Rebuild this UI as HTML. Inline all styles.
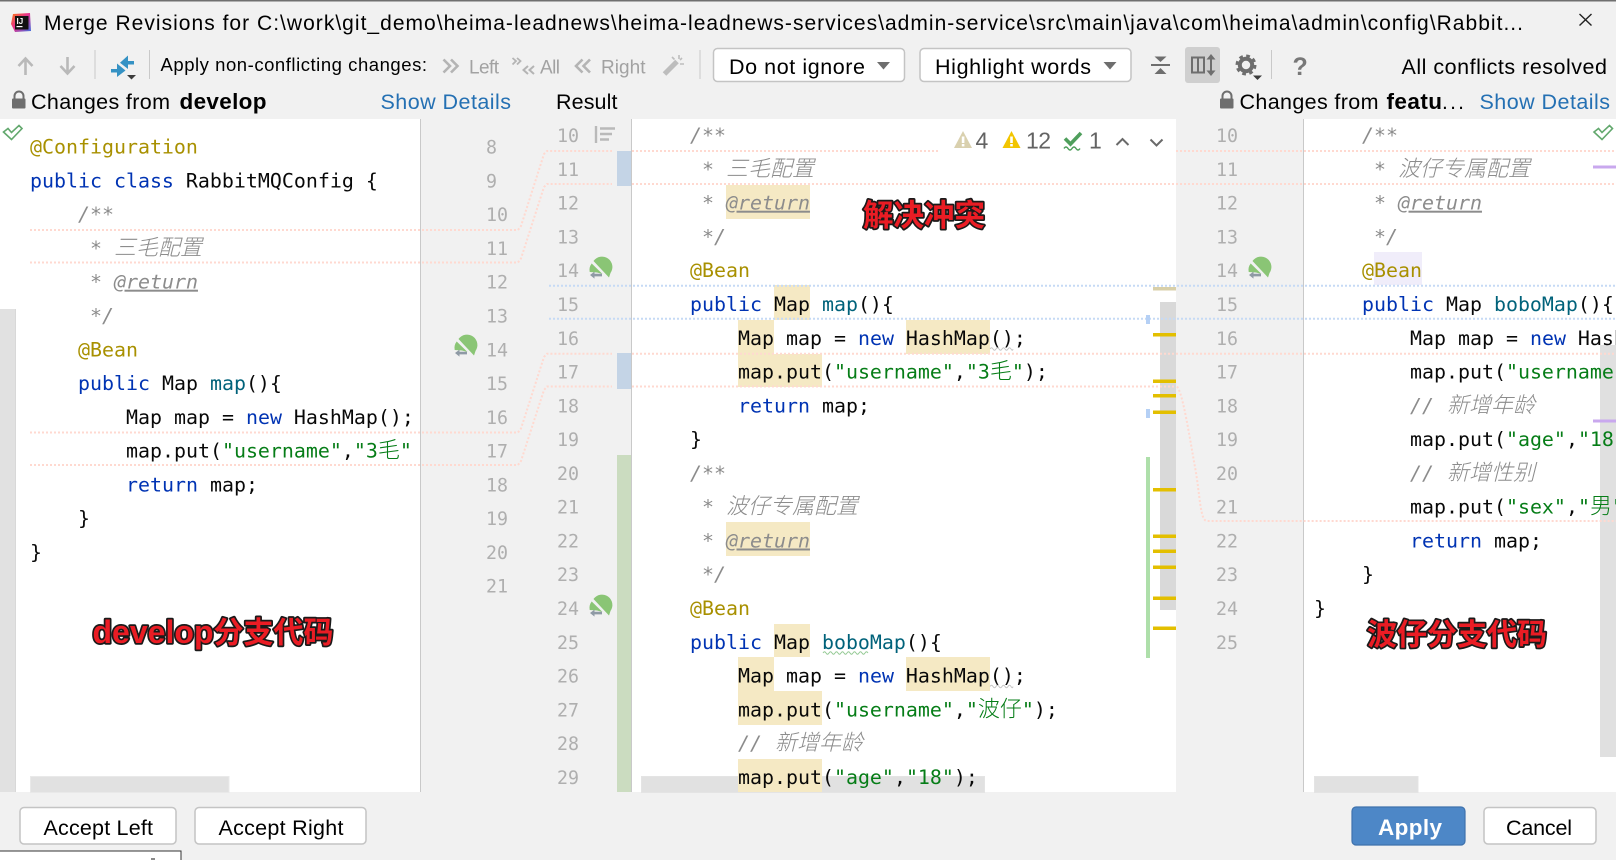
<!DOCTYPE html>
<html>
<head>
<meta charset="utf-8">
<title>Merge Revisions</title>
<style>
html,body{margin:0;padding:0;background:#f1f1f1;overflow:hidden;width:1616px;height:860px}
svg{display:block}
text{white-space:pre}
.u{font-family:"Liberation Sans","Noto Sans CJK SC",sans-serif;font-size:20.5px;fill:#000}
.b{font-weight:bold}
.g{fill:#a2a2a2}
.l{fill:#2470b3}
.m{font-family:"DejaVu Sans Mono","Noto Sans CJK SC",monospace;font-size:19.93px;fill:#080808}
.n{font-family:"DejaVu Sans Mono",monospace;font-size:18.3px;fill:#afafaf}
.k{fill:#0033b3}
.s{fill:#067d17}
.a{fill:#a89000}
.f{fill:#00627a}
.c{fill:#8c8c8c;font-style:italic}
.j{font-family:"Noto Sans CJK SC",sans-serif;font-size:22px;font-weight:300}
.t{text-decoration:underline}
.r{font-family:"Liberation Sans","Noto Sans CJK SC",sans-serif;font-weight:bold;fill:#ea1c24;stroke:#1a1a1a;stroke-width:3.4px;paint-order:stroke;stroke-linejoin:round}
.p{fill:none;stroke:#ffd9d0;stroke-width:2;stroke-dasharray:2 2}
.q{fill:none;stroke:#c6daf5;stroke-width:2;stroke-dasharray:2 2}
</style>
</head>
<body>
<svg xmlns="http://www.w3.org/2000/svg" width="1616" height="860" viewBox="0 0 1616 860">
<rect width="1616" height="860" fill="#f1f1f1"/>
<rect width="1616" height="1.5" fill="#6f6f6f"/>

<!-- editors -->
<rect x="0" y="119" width="420" height="673" fill="#fff"/>
<rect x="420" y="119" width="1" height="673" fill="#c9c9c9"/>
<rect x="632" y="119" width="544" height="673" fill="#fff"/>
<rect x="631" y="119" width="1" height="673" fill="#c9c9c9"/>
<rect x="1304" y="119" width="312" height="673" fill="#fff"/>
<rect x="1303" y="119" width="1" height="673" fill="#c9c9c9"/>

<!-- app icon -->
<defs><linearGradient id="ij" x1="0" y1="0" x2="1" y2="1"><stop offset="0" stop-color="#f97a12"/><stop offset=".45" stop-color="#e8318c"/><stop offset="1" stop-color="#3a6fe0"/></linearGradient></defs>
<path d="M13 14 L30 13 L31 31 L15 32 L11 24 Z" fill="url(#ij)"/>
<rect x="15" y="16" width="13.5" height="13.5" fill="#111"/>
<text x="16.5" y="24" font-family="Liberation Sans" font-size="8" font-weight="bold" fill="#fff">IJ</text>
<rect x="16.5" y="26" width="6" height="1.2" fill="#fff"/>

<!-- title -->
<text class="u" x="44" y="30" style="font-size:21px" textLength="1479" lengthAdjust="spacing">Merge Revisions for C:\work\git_demo\heima-leadnews\heima-leadnews-services\admin-service\src\main\java\com\heima\admin\config\Rabbit...</text>
<path d="M1579.5 14 L1591.5 25.5 M1591.5 14 L1579.5 25.5" stroke="#222" stroke-width="1.4"/>

<!-- toolbar left -->
<path d="M25.5 75 V59 M18.5 66 L25.5 58.5 L32.5 66" fill="none" stroke="#b9b9b9" stroke-width="2.6"/>
<path d="M67.5 57 V73 M60.5 66 L67.5 73.5 L74.5 66" fill="none" stroke="#b9b9b9" stroke-width="2.6"/>
<rect x="94.5" y="50" width="1" height="29" fill="#c9c9c9"/>
<path d="M134 61 H128 V55.5 L120 62.8 L128 69 V64.5 H134 Z" fill="#3592c4"/>
<path d="M111 69 H117 V63.5 L125.5 70.5 L117 77 V72.5 H111 Z" fill="#3592c4"/>
<path d="M127 75 H136 L131.5 79.5 Z" fill="#3c3c3c"/>
<rect x="149" y="50" width="1" height="29" fill="#c9c9c9"/>
<text class="u" x="160.5" y="71" style="font-size:18.5px" textLength="266.5" lengthAdjust="spacing">Apply non-conflicting changes:</text>
<path d="M443.5 59.5 L450 66 L443.5 72.5 M451 59.5 L457.5 66 L451 72.5" fill="none" stroke="#b4b4b4" stroke-width="2.6"/>
<text class="u g" x="469" y="73.5" style="font-size:19px" textLength="30" lengthAdjust="spacing">Left</text>
<path d="M512.5 58 L516 61 L512.5 64.5 M517 58 L520.5 61 L517 64.5" fill="none" stroke="#b4b4b4" stroke-width="1.8"/>
<path d="M528 66 L523.5 70 L528 74 M534 66 L529.5 70 L534 74" fill="none" stroke="#b4b4b4" stroke-width="2"/>
<text class="u g" x="540" y="73.5" style="font-size:19px" textLength="20" lengthAdjust="spacing">All</text>
<path d="M582.5 59.5 L576 66 L582.5 72.5 M590 59.5 L583.5 66 L590 72.5" fill="none" stroke="#b4b4b4" stroke-width="2.6"/>
<text class="u g" x="601" y="73.5" style="font-size:19px" textLength="44.5" lengthAdjust="spacing">Right</text>
<path d="M664.5 74 L677 61.5" stroke="#bdbdbd" stroke-width="5"/>
<path d="M679 55 V59 M684 64 H680 M672 57 L674.5 59.5 M682 58 L680 60" stroke="#bdbdbd" stroke-width="1.6" fill="none"/>
<rect x="699.5" y="50" width="1" height="29" fill="#c9c9c9"/>

<rect x="713.5" y="48.5" width="191" height="33" rx="4" fill="#fff" stroke="#c4c4c4" stroke-width="1.5"/>
<text class="u" x="729" y="74" style="font-size:21.5px" textLength="136" lengthAdjust="spacing">Do not ignore</text>
<path d="M877 62 H890 L883.5 69.5 Z" fill="#6e6e6e"/>
<rect x="920" y="48.5" width="211" height="33" rx="4" fill="#fff" stroke="#c4c4c4" stroke-width="1.5"/>
<text class="u" x="935" y="74" style="font-size:21.5px" textLength="156" lengthAdjust="spacing">Highlight words</text>
<path d="M1103.5 62 H1116.5 L1110 69.5 Z" fill="#6e6e6e"/>

<path d="M1151 65 H1170" stroke="#6e6e6e" stroke-width="2"/>
<path d="M1154.5 56.5 H1166.5 L1160.5 62 Z M1154.5 74 H1166.5 L1160.5 68 Z" fill="#6e6e6e"/>
<rect x="1185" y="47" width="35" height="36" rx="3" fill="#cfcfcf"/>
<path d="M1192 57.5 H1204 V72.5 H1192 Z M1198 57.5 V72.5" fill="none" stroke="#6e6e6e" stroke-width="2"/>
<path d="M1211 58 V72" stroke="#6e6e6e" stroke-width="2"/>
<path d="M1206.5 59.5 L1211 54 L1215.5 59.5 Z M1206.5 70.5 L1211 76 L1215.5 70.5 Z" fill="#6e6e6e"/>
<circle cx="1246" cy="65" r="6.2" fill="none" stroke="#6e6e6e" stroke-width="4"/>
<circle cx="1246" cy="65" r="8.8" fill="none" stroke="#6e6e6e" stroke-width="3.4" stroke-dasharray="3.6 3.3"/>
<path d="M1253 75.5 H1262 L1257.5 80 Z" fill="#3c3c3c"/>
<rect x="1271" y="50" width="1" height="29" fill="#c9c9c9"/>
<text x="1292.5" y="75" font-family="Liberation Sans" font-size="25" font-weight="bold" fill="#787878">?</text>
<text class="u" x="1401.5" y="74" style="font-size:21.5px" textLength="205.5" lengthAdjust="spacing">All conflicts resolved</text>

<!-- headers -->
<path d="M14.5 99 V96 A4.5 4.5 0 0 1 23.5 96 V99" fill="none" stroke="#6e6e6e" stroke-width="2"/>
<rect x="12" y="98.5" width="13.5" height="10" rx="1" fill="#6e6e6e"/>
<text class="u" x="31" y="109" style="font-size:21.5px" textLength="139" lengthAdjust="spacing">Changes from</text>
<text class="u b" x="179.5" y="109" style="font-size:22.5px" textLength="87" lengthAdjust="spacing">develop</text>
<text class="u l" x="380.5" y="109" style="font-size:21.5px" textLength="130.5" lengthAdjust="spacing">Show Details</text>
<text class="u" x="556" y="109" style="font-size:21.5px" textLength="61.5" lengthAdjust="spacing">Result</text>
<path d="M1222.5 99 V96 A4.5 4.5 0 0 1 1231.5 96 V99" fill="none" stroke="#6e6e6e" stroke-width="2"/>
<rect x="1220" y="98.5" width="13.5" height="10" rx="1" fill="#6e6e6e"/>
<text class="u" x="1239.5" y="109" style="font-size:21.5px" textLength="139" lengthAdjust="spacing">Changes from</text>
<text class="u b" x="1386.5" y="109" style="font-size:22.5px" textLength="55.5" lengthAdjust="spacing">featu</text>
<text class="u" x="1442" y="109" style="font-size:21px" textLength="22" lengthAdjust="spacing">...</text>
<text class="u l" x="1479.5" y="109" style="font-size:21.5px" textLength="130.5" lengthAdjust="spacing">Show Details</text>

<!-- scrollbars behind text -->
<rect x="0" y="309" width="15" height="483" fill="#e1e1e1"/>
<rect x="15" y="309" width="1" height="483" fill="#d8d8d8"/>
<rect x="30.5" y="776.5" width="198.5" height="16" fill="#e1e1e1" stroke="#e9e9e9"/>
<rect x="641.5" y="776.5" width="343" height="16" fill="#e1e1e1" stroke="#e4e4e4"/>
<rect x="1314.5" y="776.5" width="103.5" height="16" fill="#e1e1e1" stroke="#e4e4e4"/>
<rect x="1600" y="345" width="16" height="412" fill="#e0e0e0"/>
<rect x="1160" y="302" width="16" height="308" fill="#d9d9d9"/>

<!-- highlights -->
<g fill="#f5e9c4">
<rect x="726" y="185" width="84" height="34"/>
<rect x="774" y="285" width="36" height="35"/>
<rect x="738" y="320" width="36" height="34"/>
<rect x="906" y="320" width="84" height="34"/>
<rect x="738" y="354" width="84" height="33"/>
<rect x="726" y="522" width="84" height="34"/>
<rect x="774" y="624" width="36" height="33"/>
<rect x="738" y="657" width="36" height="34"/>
<rect x="906" y="657" width="84" height="34"/>
<rect x="738" y="691" width="84" height="34"/>
<rect x="738" y="759" width="84" height="33"/>
</g>
<rect x="1374" y="252" width="48" height="33" fill="#f0edfa"/>

<!-- gutter stripes -->
<rect x="617" y="151" width="14" height="35" fill="#c4d4e6"/>
<rect x="617" y="353" width="14" height="36" fill="#c4d4e6"/>
<rect x="617" y="455" width="14" height="337" fill="#cbdcc0"/>

<!-- bands -->
<path class="p" d="M30 230 H518 L521 226 L544 154 L547 151 H612"/>
<path class="p" d="M30 262.5 H518 L521 258.5 L544 187 L547 184 H612"/>
<path class="p" d="M30 432.5 H518 L521 428.5 L544 357 L547 353.7 H612"/>
<path class="p" d="M30 465 H518 L521 461 L544 390 L547 386.5 H612"/>
<path class="p" d="M632 151 H939"/>
<path class="p" d="M632 184 H1176"/>
<path class="p" d="M632 353.7 H1176"/>
<path class="p" d="M632 386.5 H1176"/>
<path class="q" d="M549 285.7 H1616"/>
<path class="q" d="M549 318.7 H1616"/>
<path class="p" d="M1176 151 H1616"/>
<path class="p" d="M1176 184 H1616"/>
<path class="p" d="M1176 353.7 H1616"/>
<path class="p" d="M1177 386.5 C1183 393 1190 440 1195 467 S1200 521 1207 521 H1616"/>

<g transform="translate(0,-0.6)">
<!-- left code -->
<text class="m a" x="30" y="154.2">@Configuration</text>
<text class="m" x="30" y="188"><tspan class="k">public class</tspan> RabbitMQConfig {</text>
<text class="m c" x="78" y="221.8">/**</text>
<text class="m c" x="90" y="255.5">* <tspan class="j">三毛配置</tspan></text>
<text class="m c" x="90" y="289.3">* <tspan class="t">@return</tspan></text>
<text class="m c" x="90" y="323.1">*/</text>
<text class="m a" x="78" y="356.9">@Bean</text>
<text class="m" x="78" y="390.7"><tspan class="k">public</tspan> Map <tspan class="f">map</tspan>(){</text>
<text class="m" x="126" y="424.4">Map map = <tspan class="k">new</tspan> HashMap();</text>
<text class="m" x="126" y="458.2">map.put(<tspan class="s">"username"</tspan>,<tspan class="s">"3<tspan class="j">毛</tspan>"</tspan></text>
<text class="m" x="126" y="492"><tspan class="k">return</tspan> map;</text>
<text class="m" x="78" y="525.8">}</text>
<text class="m" x="30" y="559.6">}</text>

<!-- result code -->
<text class="m c" x="690" y="142.7">/**</text>
<text class="m c" x="702" y="176.5">* <tspan class="j">三毛配置</tspan></text>
<text class="m c" x="702" y="210.3">* <tspan class="t">@return</tspan></text>
<text class="m c" x="702" y="244">*/</text>
<text class="m a" x="690" y="277.8">@Bean</text>
<text class="m" x="690" y="311.6"><tspan class="k">public</tspan> Map <tspan class="f">map</tspan>(){</text>
<text class="m" x="738" y="345.4">Map map = <tspan class="k">new</tspan> HashMap();</text>
<text class="m" x="738" y="379.2">map.put(<tspan class="s">"username"</tspan>,<tspan class="s">"3<tspan class="j">毛</tspan>"</tspan>);</text>
<text class="m" x="738" y="412.9"><tspan class="k">return</tspan> map;</text>
<text class="m" x="690" y="446.7">}</text>
<text class="m c" x="690" y="480.5">/**</text>
<text class="m c" x="702" y="514.3">* <tspan class="j">波仔专属配置</tspan></text>
<text class="m c" x="702" y="548.1">* <tspan class="t">@return</tspan></text>
<text class="m c" x="702" y="581.8">*/</text>
<text class="m a" x="690" y="615.6">@Bean</text>
<text class="m" x="690" y="649.4"><tspan class="k">public</tspan> Map <tspan class="f">boboMap</tspan>(){</text>
<text class="m" x="738" y="683.2">Map map = <tspan class="k">new</tspan> HashMap();</text>
<text class="m" x="738" y="717">map.put(<tspan class="s">"username"</tspan>,<tspan class="s">"<tspan class="j">波仔</tspan>"</tspan>);</text>
<text class="m c" x="738" y="750.7">//</text>
<text class="m c j" x="775" y="750.7">新增年龄</text>
<text class="m" x="738" y="784.5">map.put(<tspan class="s">"age"</tspan>,<tspan class="s">"18"</tspan>);</text>

<!-- right code -->
<text class="m c" x="1362" y="142.7">/**</text>
<text class="m c" x="1374" y="176.5">* <tspan class="j">波仔专属配置</tspan></text>
<text class="m c" x="1374" y="210.3">* <tspan class="t">@return</tspan></text>
<text class="m c" x="1374" y="244">*/</text>
<text class="m a" x="1362" y="277.8">@Bean</text>
<text class="m" x="1362" y="311.6"><tspan class="k">public</tspan> Map <tspan class="f">boboMap</tspan>(){</text>
<text class="m" x="1410" y="345.4">Map map = <tspan class="k">new</tspan> HashMap();</text>
<text class="m" x="1410" y="379.2">map.put(<tspan class="s">"username"</tspan>,<tspan class="s">"<tspan class="j">波仔</tspan>"</tspan>);</text>
<text class="m c" x="1410" y="412.9">//</text>
<text class="m c j" x="1447" y="412.9">新增年龄</text>
<text class="m" x="1410" y="446.7">map.put(<tspan class="s">"age"</tspan>,<tspan class="s">"18"</tspan>);</text>
<text class="m c" x="1410" y="480.5">//</text>
<text class="m c j" x="1447" y="480.5">新增性别</text>
<text class="m" x="1410" y="514.3">map.put(<tspan class="s">"sex"</tspan>,<tspan class="s">"<tspan class="j">男</tspan>"</tspan>);</text>
<text class="m" x="1410" y="548.1"><tspan class="k">return</tspan> map;</text>
<text class="m" x="1362" y="581.8">}</text>
<text class="m" x="1314" y="615.6">}</text>

<!-- line numbers -->
<text class="n" x="486" y="154.2">8</text><text class="n" x="486" y="188">9</text><text class="n" x="486" y="221.8">10</text><text class="n" x="486" y="255.5">11</text><text class="n" x="486" y="289.3">12</text><text class="n" x="486" y="323.1">13</text><text class="n" x="486" y="356.9">14</text><text class="n" x="486" y="390.7">15</text><text class="n" x="486" y="424.4">16</text><text class="n" x="486" y="458.2">17</text><text class="n" x="486" y="492">18</text><text class="n" x="486" y="525.8">19</text><text class="n" x="486" y="559.6">20</text><text class="n" x="486" y="593.3">21</text>
<text class="n" x="557" y="142.7">10</text><text class="n" x="557" y="176.5">11</text><text class="n" x="557" y="210.3">12</text><text class="n" x="557" y="244">13</text><text class="n" x="557" y="277.8">14</text><text class="n" x="557" y="311.6">15</text><text class="n" x="557" y="345.4">16</text><text class="n" x="557" y="379.2">17</text><text class="n" x="557" y="412.9">18</text><text class="n" x="557" y="446.7">19</text><text class="n" x="557" y="480.5">20</text><text class="n" x="557" y="514.3">21</text><text class="n" x="557" y="548.1">22</text><text class="n" x="557" y="581.8">23</text><text class="n" x="557" y="615.6">24</text><text class="n" x="557" y="649.4">25</text><text class="n" x="557" y="683.2">26</text><text class="n" x="557" y="717">27</text><text class="n" x="557" y="750.7">28</text><text class="n" x="557" y="784.5">29</text>
<text class="n" x="1216" y="142.7">10</text><text class="n" x="1216" y="176.5">11</text><text class="n" x="1216" y="210.3">12</text><text class="n" x="1216" y="244">13</text><text class="n" x="1216" y="277.8">14</text><text class="n" x="1216" y="311.6">15</text><text class="n" x="1216" y="345.4">16</text><text class="n" x="1216" y="379.2">17</text><text class="n" x="1216" y="412.9">18</text><text class="n" x="1216" y="446.7">19</text><text class="n" x="1216" y="480.5">20</text><text class="n" x="1216" y="514.3">21</text><text class="n" x="1216" y="548.1">22</text><text class="n" x="1216" y="581.8">23</text><text class="n" x="1216" y="615.6">24</text><text class="n" x="1216" y="649.4">25</text>
</g>

<path d="M823 653 q1.5 -2.5 3 0 t3 0 t3 0 t3 0 t3 0 t3 0 t3 0 t3 0 t3 0 t3 0 t3 0 t3 0 t3 0 t3 0 t3 0" fill="none" stroke="#8fc78f" stroke-width=".9"/>
<path d="M990 349 q1.5 -2.5 3 0 t3 0 t3 0 t3 0 t3 0 t3 0 t3 0 t2 0" fill="none" stroke="#c4c4c4" stroke-width=".9"/>
<path d="M990 686.5 q1.5 -2.5 3 0 t3 0 t3 0 t3 0 t3 0 t3 0 t3 0 t2 0" fill="none" stroke="#c4c4c4" stroke-width=".9"/>

<!-- gutter list icon -->
<path d="M596 126 V143 M600 128.5 H615 M600 134 H612 M600 139.5 H609" stroke="#b9b9b9" stroke-width="2.4" fill="none"/>

<!-- gutter badges -->
<defs>
<g id="bd">
<path d="M-6.5 -8 A10.3 10.3 0 0 1 10.5 4 L9 8.5 Z" fill="#8ac575"/>
<path d="M-10.3 3 A10.3 10.3 0 0 1 -8.3 -5.5 L2.5 5 L-3 3.5 Z" fill="#8ac575"/>
<path d="M-10 6 L-5.5 2.6 V4.8 H2 V7.4 H-5.5 V9.6 Z" fill="#8f9aa5"/>
</g>
</defs>
<use href="#bd" x="465" y="347"/>
<use href="#bd" x="600" y="269"/>
<use href="#bd" x="600" y="607"/>
<use href="#bd" x="1259" y="269"/>

<!-- inspection panel -->
<path d="M954 148 L963 131 L972 148 Z" fill="#d9d0ae"/>
<rect x="961.8" y="136.5" width="2.6" height="6.5" fill="#fff"/><rect x="961.8" y="144" width="2.6" height="2.4" fill="#fff"/>
<text x="975.5" y="148.5" font-family="Liberation Sans" font-size="23" fill="#636363">4</text>
<path d="M1002.5 148 L1011.5 131 L1020.5 148 Z" fill="#f2c500"/>
<rect x="1010.2" y="136.5" width="2.6" height="6.5" fill="#fff"/><rect x="1010.2" y="144" width="2.6" height="2.4" fill="#fff"/>
<text x="1026" y="148.5" font-family="Liberation Sans" font-size="23" fill="#636363" textLength="25" lengthAdjust="spacing">12</text>
<path d="M1065 138.5 L1070.5 144 L1081 133" fill="none" stroke="#4f9f5c" stroke-width="3.6"/>
<path d="M1064 148.5 q2 -3 4 0 t4 0 t4 0 t4 0" fill="none" stroke="#4f9f5c" stroke-width="1.4"/>
<text x="1089" y="148.5" font-family="Liberation Sans" font-size="23" fill="#636363">1</text>
<path d="M1116.5 145 L1122.5 139 L1128.5 145" fill="none" stroke="#6a6a6a" stroke-width="2"/>
<path d="M1150.5 139.5 L1156.5 145.5 L1162.5 139.5" fill="none" stroke="#6a6a6a" stroke-width="2"/>

<!-- error stripe -->
<rect x="1153" y="287" width="23" height="3.5" fill="#d8cfa8"/>
<g fill="#e3bf00">
<rect x="1153" y="333" width="23" height="3.5"/><rect x="1153" y="379.5" width="23" height="3.5"/><rect x="1153" y="394" width="23" height="3.5"/><rect x="1153" y="410.5" width="23" height="3.5"/><rect x="1153" y="488" width="23" height="3.5"/><rect x="1153" y="534.5" width="23" height="3.5"/><rect x="1153" y="549.5" width="23" height="3.5"/><rect x="1153" y="565.5" width="23" height="3.5"/><rect x="1153" y="596.5" width="23" height="3.5"/><rect x="1153" y="626.5" width="23" height="3.5"/>
</g>
<rect x="1146" y="315" width="4" height="9" fill="#b5d0f5"/>
<rect x="1146" y="409" width="4" height="9" fill="#b5d0f5"/>
<rect x="1146" y="457" width="4" height="201" fill="#aedfaa"/>

<!-- checks -->
<path d="M3.5 132 L8 128.5 L11.5 132.5 L19 125.5 L22 128.5 L11.5 139.5 Z" fill="none" stroke="#62a86d" stroke-width="1.6"/>
<path d="M1594 132 L1598.5 128.5 L1602 132.5 L1609.5 125.5 L1612.5 128.5 L1602 139.5 Z" fill="none" stroke="#62a86d" stroke-width="1.6"/>
<rect x="1593" y="165.5" width="23" height="3" fill="#c9a8ee"/>
<rect x="1593" y="419.5" width="23" height="3" fill="#c9a8ee"/>

<!-- red labels -->
<text class="r" x="92.5" y="643" style="font-size:32px"><tspan textLength="121">develop</tspan><tspan style="font-size:30px">分支代码</tspan></text>
<text class="r" x="863" y="226" style="font-size:30.5px">解决冲突</text>
<text class="r" x="1367" y="645" style="font-size:30px">波仔分支代码</text>

<!-- bottom buttons -->
<rect x="20" y="807.5" width="156" height="36.5" rx="4" fill="#fff" stroke="#c4c4c4" stroke-width="1.5"/>
<text class="u" x="43.5" y="835" style="font-size:21.5px" textLength="109.5" lengthAdjust="spacing">Accept Left</text>
<rect x="195" y="807.5" width="171" height="36.5" rx="4" fill="#fff" stroke="#c4c4c4" stroke-width="1.5"/>
<text class="u" x="218.5" y="835" style="font-size:21.5px" textLength="125" lengthAdjust="spacing">Accept Right</text>
<rect x="1352" y="807" width="113" height="38" rx="4" fill="#4d87c7" stroke="#3f72ad" stroke-width="1.2"/>
<text class="u b" x="1378" y="835" style="font-size:22.5px;fill:#fff" textLength="64" lengthAdjust="spacing">Apply</text>
<rect x="1484" y="807.5" width="112" height="36.5" rx="4" fill="#fff" stroke="#c4c4c4" stroke-width="1.5"/>
<text class="u" x="1506" y="835" style="font-size:21.5px" textLength="66" lengthAdjust="spacing">Cancel</text>

<!-- bottom-left window strip -->
<rect x="-2" y="851" width="183" height="12" fill="#fff" stroke="#333" stroke-width="1"/>
<rect x="151" y="858" width="4" height="2" fill="#8a8a8a"/>
</svg>
</body>
</html>
